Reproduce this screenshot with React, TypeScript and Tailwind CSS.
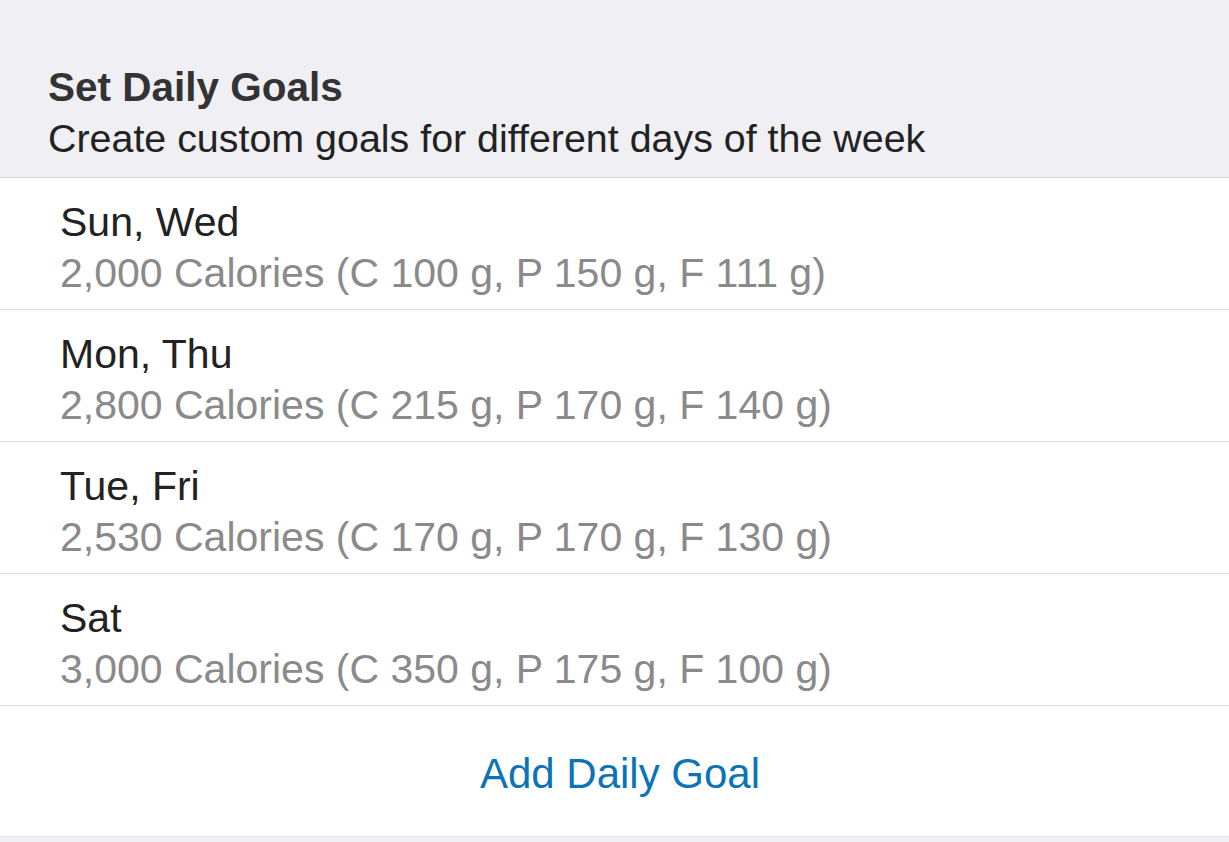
const goals = [
  { days: 'Sun, Wed', detail: '2,000 Calories (C 100 g, P 150 g, F 111 g)' },
  { days: 'Mon, Thu', detail: '2,800 Calories (C 215 g, P 170 g, F 140 g)' },
  { days: 'Tue, Fri', detail: '2,530 Calories (C 170 g, P 170 g, F 130 g)' },
  { days: 'Sat', detail: '3,000 Calories (C 350 g, P 175 g, F 100 g)' },
];

export default function App() {
  return (
    <div
      className="w-[1229px] h-[842px] overflow-hidden bg-[#efeff4]"
      style={{ fontFamily: '"Liberation Sans", Arial, sans-serif' }}
    >
      {/* Section header */}
      <div className="pt-[60px] pb-[15px] pl-[48px] border-b border-[#d6d6da]">
        <div className="text-[40.5px] leading-[54px] font-bold text-[#333333]">Set Daily Goals</div>
        <div className="text-[39.4px] leading-[48px] text-[#222222]">
          Create custom goals for different days of the week
        </div>
      </div>

      {/* Goal list */}
      <div className="bg-white">
        {goals.map((g) => (
          <div key={g.days} className="pl-[60px] pt-[19px] pb-[11px] border-b border-[#dcdcdc]">
            <div className="text-[41px] leading-[51px] text-[#222222]">{g.days}</div>
            <div className="text-[41px] leading-[50px] text-[#8a8a8a]">{g.detail}</div>
          </div>
        ))}
        <div className="h-[131px] pt-[43px] pl-[11px] text-center border-b border-[#e2e2e6]">
          <span className="text-[42px] leading-[50px] text-[#0b74b6]">Add Daily Goal</span>
        </div>
      </div>
    </div>
  );
}
